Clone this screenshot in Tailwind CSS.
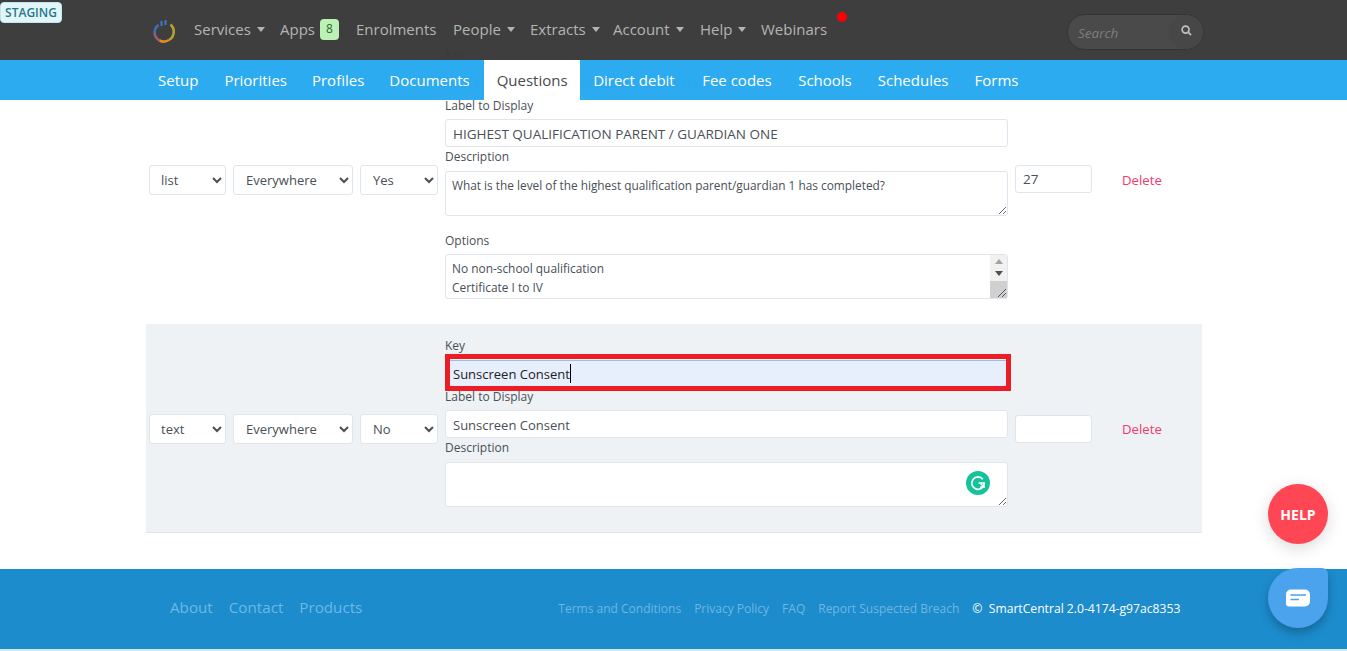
<!DOCTYPE html>
<html lang="en">
<head>
<meta charset="utf-8">
<title>Questions</title>
<script src="https://cdn.jsdelivr.net/npm/@tailwindcss/browser@4"></script>
</head>
<body class="relative h-[651px] overflow-hidden bg-white font-['Open_Sans',sans-serif] text-[#495057]">
<header class="absolute inset-x-0 top-0 z-20">
  <div class="relative flex h-[60px] items-center bg-[#3a3a3a]/[.98] pl-[152px] text-[15px] text-[#b4b4b4]">
    <span class="absolute left-0 top-[2px] flex h-[21px] w-[62px] items-center justify-center rounded-[4px] border border-[#bfe6ee] bg-[#e2f6fa] text-[12px] font-semibold text-[#27768a]">STAGING</span>
    <svg class="mt-[3px] h-[24px] w-[24px]" viewBox="0 0 24 24" fill="none" stroke-width="2.6">
      <path d="M6.5 5A9.6 9.6 0 0 0 2.6 13" stroke="#3f6fb5"/>
      <path d="M2.6 13A9.6 9.6 0 0 0 7.5 20.5" stroke="#9a5c78"/>
      <path d="M7.5 20.5A9.6 9.6 0 0 0 17 20" stroke="#e08a24"/>
      <path d="M17 20A9.6 9.6 0 0 0 18.5 4.5" stroke="#b9a12f"/>
      <path d="M9.5 1V6M13.5 0V5" stroke="#3f77c7" stroke-width="2"/>
    </svg>
    <nav class="mb-[2px] ml-[18px] flex items-center">
      <a class="flex w-[86px] items-center gap-[6px]">Services <i class="h-0 w-0 border-x-[4px] border-t-[5px] border-x-transparent border-t-[#b4b4b4]"></i></a>
      <a class="flex w-[76px] items-center gap-[5px]">Apps <b class="flex h-[21px] w-[19px] items-center justify-center rounded-[4px] bg-[#bdf0b5] text-[12px] font-normal text-[#2a6a2a]">8</b></a>
      <a class="w-[97px]">Enrolments</a>
      <a class="flex w-[77px] items-center gap-[6px]">People <i class="h-0 w-0 border-x-[4px] border-t-[5px] border-x-transparent border-t-[#b4b4b4]"></i></a>
      <a class="flex w-[83px] items-center gap-[6px]">Extracts <i class="h-0 w-0 border-x-[4px] border-t-[5px] border-x-transparent border-t-[#b4b4b4]"></i></a>
      <a class="flex w-[87px] items-center gap-[6px]">Account <i class="h-0 w-0 border-x-[4px] border-t-[5px] border-x-transparent border-t-[#b4b4b4]"></i></a>
      <a class="flex w-[61px] items-center gap-[6px]">Help <i class="h-0 w-0 border-x-[4px] border-t-[5px] border-x-transparent border-t-[#b4b4b4]"></i></a>
      <a>Webinars</a>
    </nav>
    <span class="absolute left-[837px] top-[12px] h-[10px] w-[10px] rounded-full bg-[#ff0000]"></span>
    <div class="absolute left-[1067px] top-[14px] flex h-[36px] w-[137px] items-center justify-between rounded-full border border-[#353535] bg-[#4a4a4a] pl-[10px] text-[13.5px] italic text-[#7e7e7e]">
      <span class="mt-[2px]">Search</span>
      <span class="flex h-[34px] w-[34px] items-center justify-center rounded-full bg-[#474747]">
        <svg class="mb-[3px] h-[11px] w-[11px]" viewBox="0 0 12 12" fill="none" stroke="#c0c0c0" stroke-width="1.8"><circle cx="5" cy="5" r="3.8"/><path d="M8 8l3 3"/></svg>
      </span>
    </div>
  </div>
  <nav class="flex h-[40px] items-center bg-[#28a9f0]/[.98] pl-[145px] pt-[1px] text-[15px] text-white">
    <a class="px-[13px]">Setup</a>
    <a class="pl-[13px] pr-[12.5px]">Priorities</a>
    <a class="pl-[12.5px] pr-[12.5px]">Profiles</a>
    <a class="pl-[12.5px] pr-[13px]">Documents</a>
    <a class="-mt-[1px] ml-[1.5px] flex h-[40px] w-[96px] items-center justify-center bg-white pt-[1px] text-[#4a4a4a]">Questions</a>
    <a class="pl-[13px] pr-[14px]">Direct debit</a>
    <a class="px-[13.5px]">Fee codes</a>
    <a class="px-[13px]">Schools</a>
    <a class="px-[13px]">Schedules</a>
    <a class="px-[13px]">Forms</a>
  </nav>
</header>

<main class="mx-[146px] w-[1056px] pt-[36px] text-[12px]">
  <section class="flex h-[288px] items-center gap-[7px] px-[3px]">
    <select class="h-[30px] w-[77px] rounded-[3px] border border-[#dfe5ec] bg-white pl-[7px] text-[13px]"><option>list</option></select>
    <select class="h-[30px] w-[120px] rounded-[3px] border border-[#dfe5ec] bg-white pl-[8px] text-[13px]"><option>Everywhere</option></select>
    <select class="h-[30px] w-[78px] rounded-[3px] border border-[#dfe5ec] bg-white pl-[8px] text-[13px]"><option>Yes</option></select>
    <div class="w-[563px] self-start pt-[12px]">
      <label class="block h-[21px] leading-[14px]">Key</label>
      <input class="block h-[28px] w-full rounded-[3px] border border-[#dfe5ec] bg-white px-[7px] text-[13px]" value="parent_1_highest_qualification_completed">
      <label class="block h-[22px] leading-[17px]">Label to Display</label>
      <input class="block h-[28px] w-full rounded-[3px] border border-[#dfe5ec] bg-white px-[7px] pt-[1px] text-[13.5px]" value="HIGHEST QUALIFICATION PARENT / GUARDIAN ONE">
      <label class="block h-[24px] leading-[20px]">Description</label>
      <textarea class="block h-[45px] w-full rounded-[3px] border border-[#dfe5ec] bg-white px-[6px] py-[4px] text-[11.85px] leading-[19px]">What is the level of the highest qualification parent/guardian 1 has completed?</textarea>
      <label class="block h-[38px] pt-[15px] leading-[20px]">Options</label>
      <div class="relative h-[45px]">
        <textarea class="block h-[45px] w-full overflow-hidden rounded-[3px] border border-[#dfe5ec] bg-white px-[6px] py-[4px] text-[11.9px] leading-[19px]">No non-school qualification
Certificate I to IV
Diploma
Bachelor degree or above</textarea>
        <span class="pointer-events-none absolute right-[1px] top-[1px] flex h-[43px] w-[17px] flex-col items-center bg-[#f1f1f1]">
          <i class="mt-[4px] h-0 w-0 border-x-[4px] border-b-[5px] border-x-transparent border-b-[#a3a3a3]"></i>
          <i class="mt-[7px] h-0 w-0 border-x-[4px] border-t-[5px] border-x-transparent border-t-[#505050]"></i>
          <svg class="mt-auto h-[17px] w-full bg-[#d0d0d0]" viewBox="0 0 17 17" stroke="#555" stroke-width="1"><path d="M8 16L16 8M12 16L16 12"/></svg>
        </span>
      </div>
    </div>
    <input class="mb-[2px] h-[28px] w-[77px] rounded-[3px] border border-[#dfe5ec] bg-white px-[7px] text-[13.5px]" value="27">
    <a class="ml-[23px] mt-[2px] text-[13.2px] text-[#f4386b]">Delete</a>
  </section>

  <section class="flex h-[209px] items-center gap-[7px] border-b border-[#dfe5ec] bg-[#eef2f5] px-[3px] pt-[1px]">
    <select class="h-[30px] w-[77px] rounded-[3px] border border-[#dfe5ec] bg-white pl-[7px] text-[13px]"><option>text</option></select>
    <select class="h-[30px] w-[120px] rounded-[3px] border border-[#dfe5ec] bg-white pl-[8px] text-[13px]"><option>Everywhere</option></select>
    <select class="h-[30px] w-[78px] rounded-[3px] border border-[#dfe5ec] bg-white pl-[8px] text-[13px]"><option>No</option></select>
    <div class="w-[563px] self-start pt-[11px]">
      <label class="block h-[24px] leading-[20px]">Key</label>
      <div class="relative">
        <input class="block h-[27px] w-full rounded-[3px] border border-[#8fc4ee] bg-[#e8effc] px-[7px] text-[13px] text-[#222]" value="Sunscreen Consent">
        <span class="absolute left-[125px] top-[4px] h-[19px] w-px bg-black"></span>
        <span class="pointer-events-none absolute left-0 -top-[6px] h-[37px] w-[566px] border-[5px] border-[#ee1c25]"></span>
      </div>
      <label class="block h-[23px] leading-[20px]">Label to Display</label>
      <input class="block h-[28px] w-full rounded-[3px] border border-[#dfe5ec] bg-white px-[7px] pt-[1px] text-[13px]" value="Sunscreen Consent">
      <label class="block h-[24px] leading-[20px]">Description</label>
      <div class="relative">
        <textarea class="block h-[45px] w-full rounded-[3px] border border-[#dfe5ec] bg-white px-[6px] py-[4px] text-[12px]"></textarea>
        <span class="absolute left-[521px] top-[9px] flex h-[24px] w-[24px] items-center justify-center rounded-full bg-[#15c39a]">
          <svg class="h-[16px] w-[16px]" viewBox="0 0 16 16" fill="none" stroke="#fff" stroke-width="1.7"><path d="M12.8 4.2A6.2 6.2 0 1 0 14.2 8H8.5"/><path d="M10.5 8.5l3.5 3.5M14.2 8v4h-4" stroke-width="1.4"/></svg>
        </span>
      </div>
    </div>
    <input class="h-[28px] w-[77px] rounded-[3px] border border-[#dfe5ec] bg-white px-[7px] text-[13.5px]">
    <a class="ml-[23px] mt-[2px] text-[13.2px] text-[#f4386b]">Delete</a>
  </section>
</main>

<footer class="mt-[36px] flex h-[80px] items-center bg-[#1c8ccd] pb-[2px] pl-[170px] text-[#6db8e4]">
  <div class="mb-[2px] flex gap-[16px] text-[15.2px]"><a>About</a><a>Contact</a><a>Products</a></div>
  <div class="ml-[196px] mt-[2px] flex items-center gap-[13px] text-[12px] text-[#6fb6e2]">
    <a>Terms and Conditions</a><a>Privacy Policy</a><a>FAQ</a><a>Report Suspected Breach</a>
    <span class="text-[12.15px] text-white">©&nbsp; SmartCentral 2.0-4174-g97ac8353</span>
  </div>
</footer>
<div class="h-[2px] bg-[#d6e5f5]"></div>

<button class="absolute left-[1268px] top-[484px] z-30 h-[60px] w-[60px] rounded-full bg-[#ff4654] text-[14px] font-bold text-white shadow-[0_4px_16px_rgba(0,0,0,.15)]">HELP</button>
<button class="absolute left-[1268px] top-[568px] z-30 flex h-[60px] w-[60px] items-center justify-center rounded-[30px] rounded-tr-[6px] bg-[#4aa3ec] shadow-[0_5px_10px_rgba(0,0,0,.25)]">
  <svg class="h-[24px] w-[24px]" viewBox="0 0 24 24"><path d="M5 3.500H19A5 5 0 0 1 24 8.500V15.500A5 5 0 0 1 19 20.500H3A3 3 0 0 1 0 17.500V8.500A5 5 0 0 1 5 3.500Z" fill="#fff"/><path d="M4.500 9H20M4.500 13.500H13" stroke="#4aa3ec" stroke-width="1.7"/></svg>
</button>
</body>
</html>
